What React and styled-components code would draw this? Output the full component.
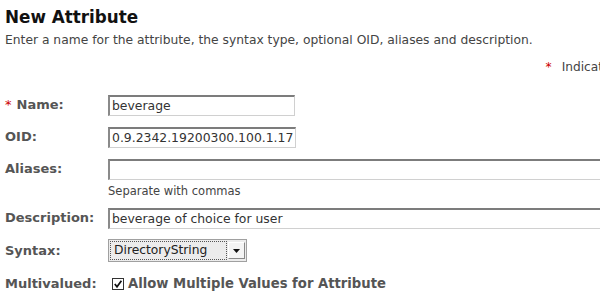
import React from "react";
import styled, { createGlobalStyle } from "styled-components";

const Global = createGlobalStyle`
  html, body { margin: 0; padding: 0; background: #fff; overflow: hidden; }
  body { font-family: "DejaVu Sans", "Liberation Sans", sans-serif; }
`;

const Page = styled.div`
  width: 707px;
  padding: 7px 5px 0 5px;
  box-sizing: border-box;
`;

const Title = styled.h1`
  margin: 0;
  font-size: 16.8px;
  font-weight: bold;
  color: #111;
  line-height: 20px;
`;

const Intro = styled.p`
  margin: 6px 0 0 0;
  font-size: 12.3px;
  color: #444;
  line-height: 15px;
`;

const Note = styled.div`
  margin-top: 12px;
  text-align: right;
  font-size: 12.2px;
  color: #444;
  line-height: 15px;
  white-space: nowrap;
`;

const Star = styled.span`
  color: #c00;
  font-weight: normal;
  margin-right: ${(p) => p.$gap || 3}px;
`;

const Form = styled.div`
  margin-top: 20px;
  display: flex;
  flex-direction: column;
`;

const Row = styled.div`
  display: flex;
  align-items: flex-start;
  margin-bottom: ${(p) => p.$mb}px;
`;

const Label = styled.div`
  width: 103px;
  flex: none;
  font-size: 13px;
  font-weight: bold;
  color: #555;
  padding-top: ${(p) => p.$pt || 2}px;
  line-height: 16px;
  white-space: nowrap;
`;

const Field = styled.div`
  display: flex;
  flex-direction: column;
`;

const TextBox = styled.div`
  width: ${(p) => p.$w}px;
  height: 21px;
  box-sizing: border-box;
  border-style: solid;
  border-width: 2px 1px 1px 2px;
  border-color: #7c7c7c #d0d0d0 #d0d0d0 #8a8a8a;
  padding: 0 2px;
  font-size: 12.4px;
  line-height: 18px;
  color: #333;
  white-space: nowrap;
  overflow: hidden;
  background: #fff;
`;

const Hint = styled.div`
  font-size: 11.5px;
  color: #444;
  margin-top: 4px;
  line-height: 14px;
`;

const Select = styled.div`
  width: 139px;
  height: 23px;
  box-sizing: border-box;
  border: 1px solid #a0a0a0;
  background: #ececec;
  display: flex;
  align-items: center;
  padding: 1px;
`;

const SelectText = styled.div`
  flex: 1;
  height: 17px;
  border: 1px dotted #555;
  font-size: 12.3px;
  line-height: 17px;
  color: #222;
  padding-left: 3px;
  margin-right: 1px;
`;

const SelectButton = styled.div`
  width: 17px;
  height: 17px;
  box-sizing: border-box;
  border: 1px solid #888;
  border-top-color: #fff;
  border-left-color: #fff;
  background: #f4f4f4;
  display: flex;
  align-items: center;
  justify-content: center;
`;

const CheckRow = styled.label`
  display: flex;
  align-items: center;
  gap: 4px;
  padding-left: 4px;
  padding-top: 2px;
  font-size: 13.2px;
  font-weight: bold;
  color: #555;
`;

const Box = styled.span`
  width: 12px;
  height: 12px;
  box-sizing: border-box;
  border: 1px solid #333;
  background: #fff;
  display: inline-flex;
  align-items: center;
  justify-content: center;
`;

export default function App() {
  return (
    <>
      <Global />
      <Page>
        <Title>New Attribute</Title>
        <Intro>
          Enter a name for the attribute, the syntax type, optional OID, aliases and description.
        </Intro>
        <Note>
          <Star $gap={10}>*</Star>Indicates required field
        </Note>
        <Form>
          <Row $mb={11}>
            <Label>
              <Star $gap={5}>*</Star>Name:
            </Label>
            <TextBox $w={187}>beverage</TextBox>
          </Row>
          <Row $mb={11}>
            <Label>OID:</Label>
            <TextBox $w={188}>0.9.2342.19200300.100.1.17</TextBox>
          </Row>
          <Row $mb={10}>
            <Label>Aliases:</Label>
            <Field>
              <TextBox $w={540}></TextBox>
              <Hint>Separate with commas</Hint>
            </Field>
          </Row>
          <Row $mb={10}>
            <Label>Description:</Label>
            <TextBox $w={540}>beverage of choice for user</TextBox>
          </Row>
          <Row $mb={12}>
            <Label $pt={4}>Syntax:</Label>
            <Select>
              <SelectText>DirectoryString</SelectText>
              <SelectButton>
                <svg width="7" height="4" viewBox="0 0 7 4">
                  <path d="M0 0h7L3.5 4z" fill="#111" />
                </svg>
              </SelectButton>
            </Select>
          </Row>
          <Row $mb={0}>
            <Label>Multivalued:</Label>
            <CheckRow>
              <Box>
                <svg width="10" height="10" viewBox="0 0 10 10">
                  <path d="M1.8 5 L4 7.8 L8.4 1.8" stroke="#111" strokeWidth="1.7" fill="none" />
                </svg>
              </Box>
              Allow Multiple Values for Attribute
            </CheckRow>
          </Row>
        </Form>
      </Page>
    </>
  );
}
